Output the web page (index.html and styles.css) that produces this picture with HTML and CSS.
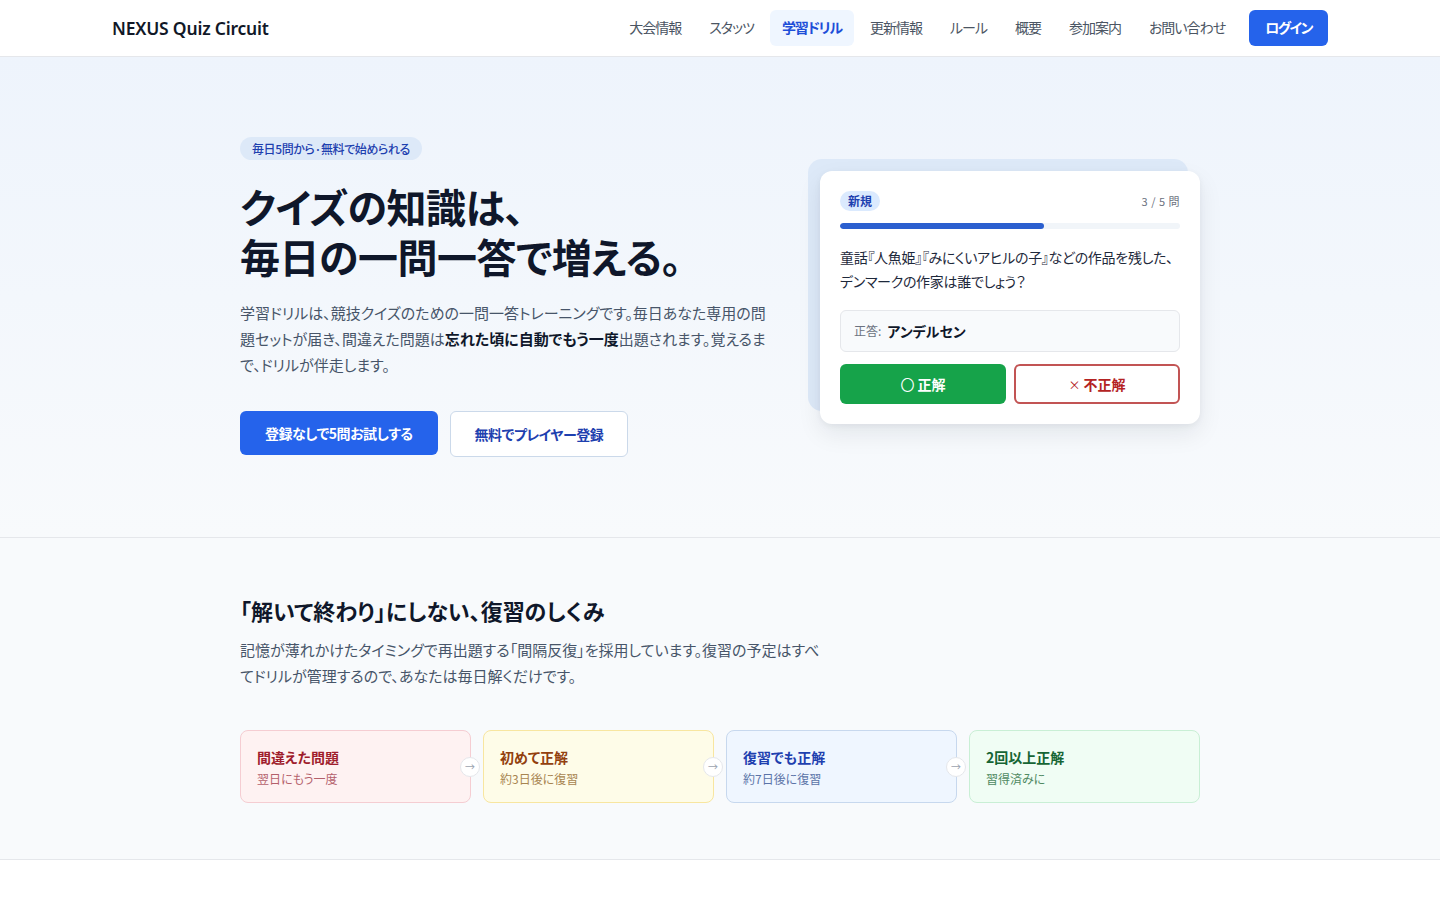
FILE: index.html
```html
<!DOCTYPE html>
<html lang="ja">
<head>
    <meta charset="UTF-8">
    <meta name="viewport" content="width=device-width, initial-scale=1.0">
    <title>学習ドリル | NEXUS Quiz Circuit</title>
    <link rel="stylesheet" href="styles.css">
</head>
<body>
    <!-- Header -->
    <header class="site-header">
        <div class="header-inner">
            <a class="logo" href="#">NEXUS Quiz Circuit</a>
            <nav class="main-nav">
                <a href="#">大会情報</a>
                <a href="#">スタッツ</a>
                <a href="#" class="active">学習ドリル</a>
                <a href="#">更新情報</a>
                <a href="#">ルール</a>
                <a href="#">概要</a>
                <a href="#">参加案内</a>
                <a href="#">お問い合わせ</a>
                <a href="#" class="login-btn">ログイン</a>
            </nav>
        </div>
    </header>

    <!-- Hero -->
    <section class="hero">
        <div class="hero-inner">
            <div class="hero-text">
                <span class="hero-badge">毎日5問から·無料で始められる</span>
                <h1>クイズの知識は、<br>毎日の一問一答で増える。</h1>
                <p class="hero-lead">学習ドリルは、競技クイズのための一問一答トレーニングです。毎日あなた専用の問題セットが届き、間違えた問題は<strong>忘れた頃に自動でもう一度</strong>出題されます。覚えるまで、ドリルが伴走します。</p>
                <div class="hero-actions">
                    <a href="#" class="btn btn-primary">登録なしで5問お試しする</a>
                    <a href="#" class="btn btn-outline">無料でプレイヤー登録</a>
                </div>
            </div>

            <div class="hero-demo">
                <div class="demo-card">
                    <div class="demo-top">
                        <span class="tag-new">新規</span>
                        <span class="demo-count">3 / 5 問</span>
                    </div>
                    <div class="progress"><div class="progress-fill" style="width: 60%"></div></div>
                    <p class="demo-question">童話『人魚姫』『みにくいアヒルの子』などの作品を残した、デンマークの作家は誰でしょう？</p>
                    <div class="demo-answer">
                        <span class="answer-label">正答:</span>
                        <span class="answer-value">アンデルセン</span>
                    </div>
                    <div class="demo-buttons">
                        <button class="judge judge-ok"><span class="mark">〇</span> 正解</button>
                        <button class="judge judge-ng"><span class="mark">×</span> 不正解</button>
                    </div>
                </div>
            </div>
        </div>
    </section>

    <!-- How review works -->
    <section class="review">
        <div class="review-inner">
            <h2>「解いて終わり」にしない、復習のしくみ</h2>
            <p class="review-lead">記憶が薄れかけたタイミングで再出題する「間隔反復」を採用しています。復習の予定はすべてドリルが管理するので、あなたは毎日解くだけです。</p>

            <div class="steps">
                <div class="step step-red">
                    <div class="step-title">間違えた問題</div>
                    <div class="step-sub">翌日にもう一度</div>
                    <span class="step-arrow">→</span>
                </div>
                <div class="step step-yellow">
                    <div class="step-title">初めて正解</div>
                    <div class="step-sub">約3日後に復習</div>
                    <span class="step-arrow">→</span>
                </div>
                <div class="step step-blue">
                    <div class="step-title">復習でも正解</div>
                    <div class="step-sub">約7日後に復習</div>
                    <span class="step-arrow">→</span>
                </div>
                <div class="step step-green">
                    <div class="step-title">2回以上正解</div>
                    <div class="step-sub">習得済みに</div>
                </div>
            </div>
        </div>
    </section>

    <div class="page-rest"></div>
</body>
</html>
```

FILE: styles.css
```css
* {
    box-sizing: border-box;
}

body {
    margin: 0;
    font-family: "Noto Sans CJK JP", "Noto Sans", sans-serif;
    color: #0f172a;
    background: #ffffff;
    font-feature-settings: "palt";
}

a {
    text-decoration: none;
    color: inherit;
}

/* Header */
.site-header {
    background: #ffffff;
    border-bottom: 1px solid #e5e7eb;
}

.header-inner {
    max-width: 1280px;
    margin: 0 auto;
    padding: 0 32px;
    height: 56px;
    display: flex;
    align-items: center;
    justify-content: space-between;
}

.logo {
    font-family: "Noto Sans", sans-serif;
    font-size: 17.5px;
    font-weight: 600;
    color: #111827;
    letter-spacing: -0.2px;
}

.main-nav {
    display: flex;
    align-items: center;
    gap: 4px;
}

.main-nav a {
    font-size: 14px;
    color: #4b5563;
    padding: 0 12px;
    height: 36px;
    line-height: 35px;
    border-radius: 6px;
    letter-spacing: -1px;
}

.main-nav a.active {
    background: #eff6ff;
    color: #1d4ed8;
    font-weight: 700;
    letter-spacing: -1.2px;
}

.main-nav a.login-btn {
    margin-left: 8px;
    background: #2563eb;
    color: #ffffff;
    font-weight: 700;
    padding: 0 16px;
    letter-spacing: -1.5px;
}

/* Hero */
.hero {
    background: linear-gradient(180deg, #eef4fc 0%, #f8fafc 100%);
    border-bottom: 1px solid #e5e7eb;
    padding: 80px 0 80px;
}

.hero-inner {
    max-width: 960px;
    margin: 0 auto;
    display: grid;
    grid-template-columns: 1fr 380px;
    gap: 45px;
    align-items: center;
}

.hero-text {
    display: flex;
    flex-direction: column;
    align-items: flex-start;
}

.hero-badge {
    font-size: 12px;
    font-weight: 500;
    color: #1e40af;
    background: #dde9f8;
    padding: 2px 12px;
    line-height: 19px;
    border-radius: 999px;
    letter-spacing: -0.4px;
}

.hero h1 {
    margin: 21px 0 19px;
    font-size: 40px;
    line-height: 50px;
    font-weight: 700;
    color: #0f172a;
    letter-spacing: -0.5px;
}

.hero-lead {
    margin: 0;
    font-size: 15px;
    line-height: 26px;
    color: #475569;
}

.hero-lead strong {
    color: #0f172a;
    font-weight: 700;
}

.hero-actions {
    margin-top: 33px;
    display: flex;
    gap: 12px;
}

.btn {
    display: inline-block;
    font-size: 14px;
    font-weight: 700;
    height: 44px;
    line-height: 44px;
    border-radius: 6px;
    letter-spacing: -0.5px;
}

.btn-primary {
    background: #2563eb;
    color: #ffffff;
    padding: 0 25px;
}

.btn-outline {
    background: #ffffff;
    color: #1e40af;
    border: 1px solid #cbd9ea;
    height: 46px;
    line-height: 44px;
    padding: 0 24px;
    font-weight: 600;
}

/* Demo card */
.hero-demo {
    position: relative;
}

.hero-demo::before {
    content: "";
    position: absolute;
    left: -12px;
    top: -12px;
    right: 12px;
    bottom: 13px;
    background: #dde9f8;
    border-radius: 14px;
}

.demo-card {
    position: relative;
    background: #ffffff;
    border-radius: 12px;
    padding: 20px;
    box-shadow: 0 10px 25px rgba(15, 23, 42, 0.08), 0 2px 6px rgba(15, 23, 42, 0.05);
}

.demo-top {
    display: flex;
    justify-content: space-between;
    align-items: center;
    height: 20px;
}

.tag-new {
    font-size: 12px;
    font-weight: 700;
    color: #1e40af;
    background: #dbeafe;
    padding: 0 8px;
    line-height: 20px;
    border-radius: 999px;
}

.demo-count {
    font-size: 11px;
    color: #6b7280;
    letter-spacing: 0.5px;
}

.progress {
    margin-top: 12px;
    height: 6px;
    background: #f1f5f9;
    border-radius: 999px;
    overflow: hidden;
}

.progress-fill {
    height: 100%;
    background: #2b5fcf;
    border-radius: 999px;
}

.demo-question {
    margin: 16px 0 17px;
    font-size: 14px;
    line-height: 24px;
    color: #1e293b;
    letter-spacing: -0.3px;
}

.demo-answer {
    height: 42px;
    display: flex;
    align-items: center;
    gap: 6px;
    padding: 0 13px;
    background: #f8fafc;
    border: 1px solid #e5e7eb;
    border-radius: 6px;
}

.answer-label {
    font-size: 12px;
    color: #6b7280;
}

.answer-value {
    font-size: 14px;
    font-weight: 700;
    color: #0f172a;
}

.demo-buttons {
    margin-top: 12px;
    display: grid;
    grid-template-columns: 1fr 1fr;
    gap: 8px;
}

.judge {
    height: 40px;
    font-family: inherit;
    font-size: 14px;
    font-weight: 700;
    border-radius: 6px;
    cursor: pointer;
}

.judge .mark {
    font-weight: 400;
}

.judge-ng .mark {
    font-size: 12px;
}

.judge-ok {
    background: #16a34a;
    color: #ffffff;
    border: none;
}

.judge-ng {
    background: #ffffff;
    color: #b42323;
    border: 2px solid #c25454;
}

/* Review section */
.review {
    background: #f8fafc;
    border-bottom: 1px solid #e5e7eb;
    padding: 56px 0 56px;
}

.review-inner {
    max-width: 960px;
    margin: 0 auto;
}

.review h2 {
    margin: 0 0 11px;
    font-size: 22px;
    line-height: 32px;
    font-weight: 700;
    color: #0f172a;
}

.review-lead {
    margin: 0;
    max-width: 580px;
    font-size: 15px;
    line-height: 26px;
    color: #475569;
}

.steps {
    margin-top: 41px;
    display: grid;
    grid-template-columns: repeat(4, 1fr);
    gap: 12px;
}

.step {
    position: relative;
    height: 73px;
    padding: 15px 16px;
    border-radius: 8px;
    border: 1px solid;
}

.step-title {
    font-size: 14px;
    font-weight: 700;
    line-height: 22px;
}

.step-sub {
    font-size: 12px;
    line-height: 22px;
}

.step-arrow {
    position: absolute;
    right: -10px;
    top: 50%;
    margin-top: -10px;
    width: 20px;
    height: 20px;
    border-radius: 50%;
    background: #ffffff;
    border: 1px solid #e5e7eb;
    color: #9ca3af;
    font-size: 10px;
    line-height: 18px;
    text-align: center;
    z-index: 1;
}

.step-red {
    background: #fef2f2;
    border-color: #f5cdd2;
}

.step-red .step-title {
    color: #9f1d2c;
}

.step-red .step-sub {
    color: #b4606b;
}

.step-yellow {
    background: #fefce8;
    border-color: #f8e6a0;
}

.step-yellow .step-title {
    color: #92400e;
}

.step-yellow .step-sub {
    color: #a88550;
}

.step-blue {
    background: #eff6ff;
    border-color: #c7d8ee;
}

.step-blue .step-title {
    color: #1e40af;
}

.step-blue .step-sub {
    color: #5b74a8;
}

.step-green {
    background: #f0fdf4;
    border-color: #c9efd5;
}

.step-green .step-title {
    color: #166534;
}

.step-green .step-sub {
    color: #4f8a62;
}

.page-rest {
    height: 200px;
    background: #ffffff;
}
```
